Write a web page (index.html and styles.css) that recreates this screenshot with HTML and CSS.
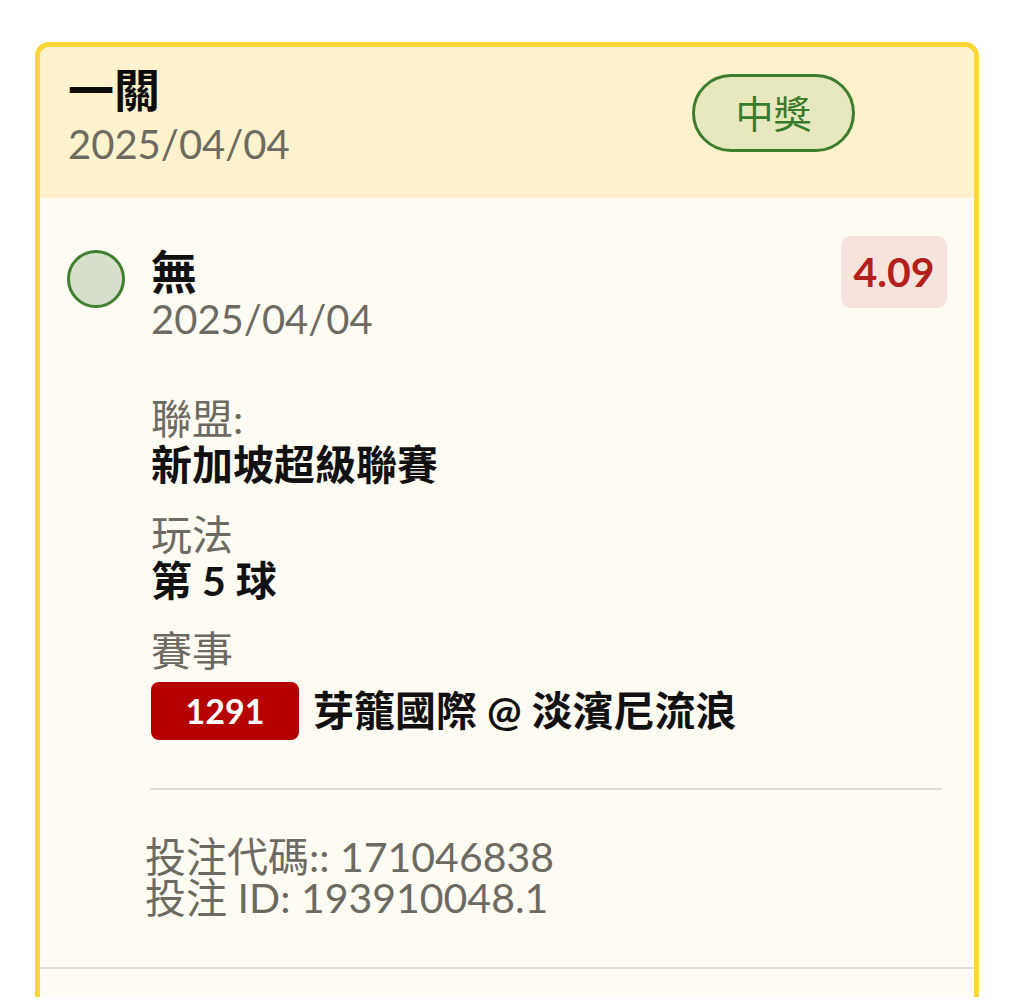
FILE: index.html
```html
<!DOCTYPE html>
<html lang="zh-Hant">
<head>
<meta charset="utf-8">
<link rel="stylesheet" href="styles.css">
</head>
<body>
<div class="page">
  <div class="card">
    <div class="card-head">
      <div class="head-text">
        <div class="title">一關</div>
        <div class="date">2025/04/04</div>
      </div>
      <div class="chip">中獎</div>
    </div>
    <div class="card-body">
      <div class="sel-row">
        <div class="dot"></div>
        <div class="sel-main">
          <div class="sel-name">無</div>
          <div class="date">2025/04/04</div>
          <div class="field field-first">
            <div class="label">聯盟:</div>
            <div class="value">新加坡超級聯賽</div>
          </div>
          <div class="field">
            <div class="label">玩法</div>
            <div class="value">第 5 球</div>
          </div>
          <div class="field">
            <div class="label">賽事</div>
            <div class="match">
              <span class="match-no">1291</span>
              <span class="value">芽籠國際 @ 淡濱尼流浪</span>
            </div>
          </div>
        </div>
        <div class="odds">4.09</div>
      </div>
      <div class="sep"></div>
      <div class="codes">
        <div>投注代碼:: 171046838</div>
        <div>投注 ID: 193910048.1</div>
      </div>
    </div>
    <div class="card-foot"></div>
  </div>
</div>
</body>
</html>
```
FILE: styles.css
```css
html, body {
  margin: 0;
  padding: 0;
  background: #ffffff;
}
body {
  font-family: Lato, "Noto Sans CJK TC", sans-serif;
  font-size: 41px;
  line-height: 46px;
  color: #111111;
}
.page {
  padding: 42px 30px 0 35px;
}
.card {
  border: 5px solid #fdd835;
  border-bottom: none;
  border-radius: 14px 14px 0 0;
  overflow: hidden;
  background: #fffcf3;
}
.card-head {
  background: #fff2cc;
  display: flex;
  justify-content: space-between;
  align-items: flex-start;
  padding: 19px 28px 31px 28px;
}
.title {
  font-size: 46px;
  font-weight: 700;
  line-height: 48px;
  margin-bottom: 7px;
  color: #0c0c0c;
}
.date {
  color: #6d6a62;
  font-size: 40px;
}
.chip {
  margin-top: 8px;
  margin-right: 91px;
  width: 163px;
  height: 78px;
  box-sizing: border-box;
  border: 3px solid #3d7d2c;
  border-radius: 40px;
  background: #e8e8be;
  color: #3a7b2a;
  display: flex;
  align-items: center;
  justify-content: center;
  font-size: 38px;
}
.card-body {
  padding: 38px 27px 0 0;
}
.sel-row {
  display: flex;
  align-items: flex-start;
}
.dot {
  width: 58px;
  height: 58px;
  box-sizing: border-box;
  margin: 14px 26px 0 27px;
  border: 3px solid #3f7f2f;
  border-radius: 50%;
  background: #d6dfc9;
  flex: none;
}
.sel-main {
  flex: 1;
  padding-top: 12px;
}
.sel-name {
  font-size: 46px;
  font-weight: 700;
  line-height: 48px;
}
.field {
  margin-top: 24px;
}
.field-first {
  margin-top: 54px;
}
.label {
  color: #6d6a62;
}
.value {
  font-weight: 700;
}
.match {
  display: flex;
  align-items: center;
  gap: 14px;
  margin-top: 8px;
}
.match-no {
  background: #b60000;
  color: #ffffff;
  font-weight: 700;
  font-size: 34px;
  width: 148px;
  height: 58px;
  border-radius: 8px;
  display: flex;
  align-items: center;
  justify-content: center;
}
.odds {
  background: #f6e4dc;
  color: #b3201c;
  font-weight: 700;
  width: 106px;
  height: 72px;
  border-radius: 10px;
  display: flex;
  align-items: center;
  justify-content: center;
  flex: none;
}
.sep {
  height: 2px;
  background: #e2dfd7;
  margin: 48px 5px 0 110px;
}
.codes {
  margin: 46px 0 0 105px;
  color: #6d6a62;
  line-height: 41px;
  padding-bottom: 49px;
}
.card-foot {
  border-top: 2px solid #e4e1d9;
  height: 28px;
}
```
